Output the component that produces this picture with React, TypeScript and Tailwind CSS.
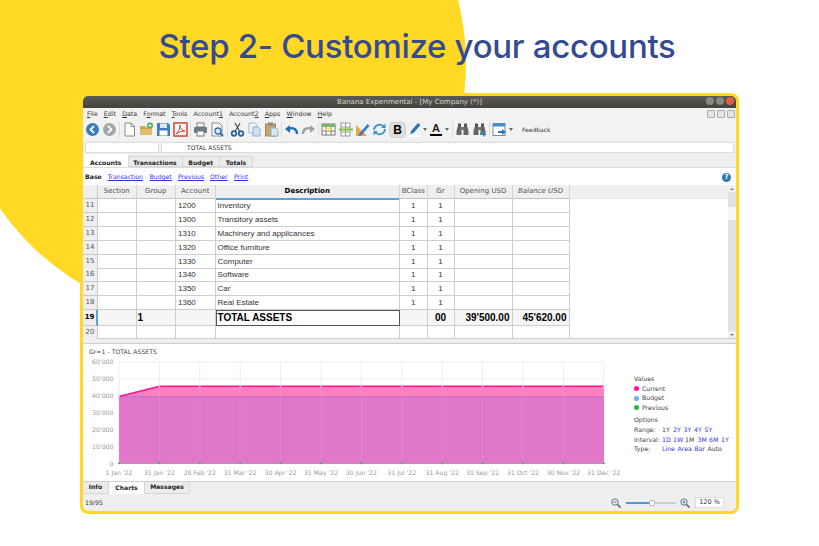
import React from 'react';

const MENU = [
  { pre: '', u: 'F', post: 'ile' },
  { pre: '', u: 'E', post: 'dit' },
  { pre: '', u: 'D', post: 'ata' },
  { pre: 'F', u: 'o', post: 'rmat' },
  { pre: '', u: 'T', post: 'ools' },
  { pre: 'Account', u: '1', post: '' },
  { pre: 'Account', u: '2', post: '' },
  { pre: '', u: 'A', post: 'pps' },
  { pre: '', u: 'W', post: 'indow' },
  { pre: '', u: 'H', post: 'elp' },
];

const COLS = 'grid grid-cols-[15px_38.5px_39.5px_39.5px_184.5px_27.5px_27px_58px_57px]';

const ROWS = [
  { n: '11', acc: '1200', desc: 'Inventory' },
  { n: '12', acc: '1300', desc: 'Transitory assets' },
  { n: '13', acc: '1310', desc: 'Machinery and applicances' },
  { n: '14', acc: '1320', desc: 'Office furniture' },
  { n: '15', acc: '1330', desc: 'Computer' },
  { n: '16', acc: '1340', desc: 'Software' },
  { n: '17', acc: '1350', desc: 'Car' },
  { n: '18', acc: '1360', desc: 'Real Estate' },
];

const TICKS = ["1 Jan '22", "31 Jan '22", "28 Feb '22", "31 Mar '22", "30 Apr '22", "31 May '22", "30 Jun '22", "31 Jul '22", "31 Aug '22", "30 Sep '22", "31 Oct '22", "30 Nov '22", "31 Dec '22"];
const YS = ["60'000", "50'000", "40'000", "30'000", "20'000", "10'000", '0'];

const Tool: React.FC<{ children?: React.ReactNode }> = ({ children }) => (
  <div className="w-[17px] h-[16px] flex items-center justify-center shrink-0">
    <svg width="15" height="15" viewBox="0 0 15 15">{children}</svg>
  </div>
);

const Sep = () => (
  <div className="w-[3px] h-[16px] flex justify-center shrink-0">
    <div className="w-px h-full bg-[#dcdcdc]" />
  </div>
);

const Caret = () => <div className="w-0 h-0 border-x-[2.5px] border-x-transparent border-t-[3px] border-t-[#666] shrink-0" />;

const Binoculars: React.FC<{ arrow?: boolean }> = ({ arrow }) => (
  <Tool>
    <rect x="3" y="1.5" width="3" height="4" fill="#555" />
    <rect x="9" y="1.5" width="3" height="4" fill="#555" />
    <rect x="6" y="5" width="3" height="3" fill="#777" />
    <path d="M2.5 5h4v8h-5v-4z M8.500 5h4l1 4v4h-5z" fill="#666" />
    {arrow && <path d="M8 11h3V9l3.500 3-3.500 3v-2H8z" fill="#3b82c4" />}
  </Tool>
);

const Toolbar = () => (
  <div className="h-[20px] shrink-0 flex items-center pl-px pb-px bg-[#f2f2f2]">
    <Tool>
      <circle cx="7.500" cy="7.500" r="6.500" fill="#3a7cbd" />
      <path d="M9 4 5.500 7.500 9 11" fill="none" stroke="#fff" strokeWidth="1.800" />
    </Tool>
    <Tool>
      <circle cx="7.500" cy="7.500" r="6.500" fill="#a6a6a6" />
      <path d="M6 4l3.500 3.500L6 11" fill="none" stroke="#fff" strokeWidth="1.800" />
    </Tool>
    <Sep />
    <Tool>
      <path d="M3 1h6l3.500 3.500V14H3z" fill="#fff" stroke="#8a8a8a" />
      <path d="M9 1v3.500h3.500" fill="none" stroke="#8a8a8a" />
    </Tool>
    <Tool>
      <path d="M1 4h5l1 1.500h6V13H1z" fill="#c9a75c" />
      <path d="M1 7h12v6H1z" fill="#e0bd6c" />
      <circle cx="11" cy="3.500" r="3" fill="#4fae5c" />
      <path d="M11 2v3M9.500 3.500h3" stroke="#fff" />
    </Tool>
    <Tool>
      <path d="M1 1h11l2 2v11H1z" fill="#3d7fc0" />
      <rect x="4" y="1.500" width="7" height="4.500" fill="#dfe9f3" />
      <rect x="3.500" y="8.500" width="8" height="5" fill="#fff" />
    </Tool>
    <Tool>
      <rect x="1" y="1" width="13" height="13" fill="#fff" stroke="#d6402f" strokeWidth="1.500" />
      <path d="M3 12c3-2 4-6 4-9 0 3 2 6 5 6-3 0-6 1-9 3z" fill="none" stroke="#d6402f" />
    </Tool>
    <Sep />
    <Tool>
      <rect x="4" y="1" width="7" height="4" fill="#fff" stroke="#777" />
      <rect x="1" y="5" width="13" height="6" rx="1" fill="#6f7a85" />
      <rect x="4" y="9" width="7" height="5" fill="#fff" stroke="#777" />
    </Tool>
    <Tool>
      <path d="M2 1h7l3 3v10H2z" fill="#fff" stroke="#8a8a8a" />
      <circle cx="8" cy="9" r="3" fill="#dbe9f5" stroke="#2f6ea8" strokeWidth="1.300" />
      <path d="M10 11l3 3" stroke="#2f6ea8" strokeWidth="1.800" />
    </Tool>
    <Sep />
    <Tool>
      <path d="M5 1l4.500 8M10 1L5.500 9" stroke="#555" strokeWidth="1.300" />
      <circle cx="4" cy="11.500" r="2.300" fill="none" stroke="#1f5c96" strokeWidth="1.700" />
      <circle cx="11" cy="11.500" r="2.300" fill="none" stroke="#1f5c96" strokeWidth="1.700" />
    </Tool>
    <Tool>
      <path d="M2 1h6l2 2v8H2z" fill="#eef3f8" stroke="#9db8d2" />
      <path d="M6 5h5l2 2v7H6z" fill="#cfe0f0" stroke="#8fb0cf" />
    </Tool>
    <Tool>
      <rect x="1.500" y="2" width="10" height="12" fill="#c9a568" stroke="#a5844c" />
      <rect x="4" y="0.500" width="5" height="3" fill="#888" />
      <path d="M7 6h5l2 2v6H7z" fill="#dbe6f1" stroke="#8fb0cf" />
    </Tool>
    <Sep />
    <Tool>
      <path d="M13 12c0-5-4-7-8.500-5" fill="none" stroke="#1f6fb5" strokeWidth="2.300" />
      <path d="M1 7l5-4v8z" fill="#1f6fb5" />
    </Tool>
    <Tool>
      <path d="M2 12c0-5 4-7 8.500-5" fill="none" stroke="#a0a0a0" strokeWidth="2.300" />
      <path d="M14 7l-5-4v8z" fill="#a0a0a0" />
    </Tool>
    <Sep />
    <Tool>
      <rect x="1" y="2" width="13" height="11" fill="#fff" stroke="#777" />
      <rect x="1" y="2" width="13" height="3" fill="#7bb661" />
      <path d="M1 9h13M5 5v8M10 5v8" stroke="#777" />
      <rect x="5" y="6" width="5" height="3" fill="#f0e080" />
    </Tool>
    <Tool>
      <rect x="3" y="1" width="9" height="13" fill="#fff" stroke="#999" />
      <path d="M3 5h9M3 10h9M7.500 1v13" stroke="#999" />
      <path d="M1 7.500h14" stroke="#7ec13f" strokeWidth="2" />
    </Tool>
    <Tool>
      <path d="M1 14V3l11 11z" fill="#eda349" />
      <path d="M4 12l8.500-10 2 2L6 13.500 3.500 14z" fill="#2f7fc4" />
    </Tool>
    <Tool>
      <path d="M2 8a5.500 5.500 0 0 1 9.500-3.500" fill="none" stroke="#3d8ed0" strokeWidth="1.800" />
      <path d="M13 7a5.500 5.500 0 0 1-9.500 3.500" fill="none" stroke="#3d8ed0" strokeWidth="1.800" />
      <path d="M13.500 1.500v4.500H9zM1.500 13.500V9H6z" fill="#3d8ed0" />
    </Tool>
    <div className="w-[17px] h-[16px] ml-[1px] bg-[#dedede] border border-[#d2d2d2] rounded-sm flex items-center justify-center font-['Liberation_Sans',sans-serif] text-[12px] font-bold text-black shrink-0">B</div>
    <div className="w-[16px] flex items-center justify-end shrink-0">
      <svg width="13" height="15" viewBox="0 0 13 15">
        <path d="M2 9l7-8 2.500 2-7 8-3 1z" fill="#2f74b5" />
        <rect x="0" y="13" width="11" height="2" fill="#fff" />
      </svg>
    </div>
    <div className="w-[5px] flex justify-end shrink-0"><Caret /></div>
    <div className="w-[16px] flex flex-col items-center leading-none shrink-0 ml-[1px]">
      <span className="font-['Liberation_Sans',sans-serif] text-[11px] font-bold text-[#222] h-[11px] leading-[11px]">A</span>
      <div className="w-[12px] h-[2px] bg-black" />
    </div>
    <div className="w-[5px] flex justify-end shrink-0"><Caret /></div>
    <div className="w-[2px] shrink-0" />
    <Sep />
    <Binoculars />
    <Binoculars arrow />
    <Sep />
    <Tool>
      <rect x="1" y="1.500" width="12" height="12" fill="#fff" stroke="#7f8c99" />
      <rect x="1" y="1.500" width="12" height="3" fill="#3d8ed0" />
      <path d="M6 9h4V7l4 3-4 3v-2H6z" fill="#2f74b5" />
    </Tool>
    <div className="w-[5px] flex justify-end shrink-0"><Caret /></div>
    <span className="ml-[9px] text-[6px] text-[#333]">Feedback</span>
  </div>
);

const Table = () => (
  <div className="relative h-[154px] shrink-0 flex bg-white border-b border-[#cfcfcf] font-['Liberation_Sans',sans-serif]">
    <div className="flex-1 min-w-0 flex flex-col">
      <div className={`${COLS} h-[14px] bg-[#efefef] border-b border-[#c4c4c4] font-['DejaVu_Sans',sans-serif] text-[7px] text-[#555] text-center leading-[13px]`}>
        <div className="border-r border-[#c8c8c8]" />
        <div className="border-r border-[#d4d4d4]">Section</div>
        <div className="border-r border-[#d4d4d4]">Group</div>
        <div className="border-r border-[#d4d4d4]">Account</div>
        <div className="border-r border-[#d4d4d4] border-b-2 border-b-[#5ba3d6] font-bold text-black">Description</div>
        <div className="border-r border-[#d4d4d4]">BClass</div>
        <div className="border-r border-[#d4d4d4]">Gr</div>
        <div className="border-r border-[#d4d4d4]">Opening USD</div>
        <div className="border-r border-[#d4d4d4] italic">Balance USD</div>
      </div>
      {ROWS.map((r) => (
        <div key={r.n} className={`${COLS} h-[13.900px] text-[8px] text-[#333] leading-[13px]`}>
          <div className="bg-[#efefef] border-r border-b border-[#c8c8c8] text-center font-['DejaVu_Sans',sans-serif] text-[7px] text-[#555]">{r.n}</div>
          <div className="border-r border-b border-[#cdcdcd]" />
          <div className="border-r border-b border-[#cdcdcd]" />
          <div className="border-r border-b border-[#cdcdcd] pl-[2px]">{r.acc}</div>
          <div className="border-r border-b border-[#cdcdcd] pl-[2px]">{r.desc}</div>
          <div className="border-r border-b border-[#cdcdcd] text-center">1</div>
          <div className="border-r border-b border-[#cdcdcd] text-center">1</div>
          <div className="border-r border-b border-[#cdcdcd]" />
          <div className="border-r border-b border-[#cdcdcd]" />
        </div>
      ))}
      <div className={`${COLS} h-[15.700px] text-[10px] font-bold text-black leading-[15px]`}>
        <div className="bg-[#efefef] border-r-2 border-r-[#5ba3d6] border-b border-b-[#c8c8c8] text-center font-['DejaVu_Sans',sans-serif] text-[7px]">19</div>
        <div className="bg-[#f5f5f5] border-r border-b border-[#cdcdcd]" />
        <div className="bg-[#f5f5f5] border-r border-b border-[#cdcdcd] pl-px">1</div>
        <div className="bg-[#f5f5f5] border-r border-b border-[#cdcdcd]" />
        <div className="border border-[#555] pl-[1px] leading-[13px]">TOTAL ASSETS</div>
        <div className="bg-[#f5f5f5] border-r border-b border-[#cdcdcd]" />
        <div className="bg-[#f5f5f5] border-r border-b border-[#cdcdcd] text-center">00</div>
        <div className="bg-[#f5f5f5] border-r border-b border-[#cdcdcd] text-right pr-[2px]">39'500.00</div>
        <div className="bg-[#f5f5f5] border-r border-b border-[#cdcdcd] text-right pr-[2px]">45'620.00</div>
      </div>
      <div className={`${COLS} h-[13.400px] text-[8px] leading-[13px]`}>
        <div className="bg-[#efefef] border-r border-[#c8c8c8] text-center font-['DejaVu_Sans',sans-serif] text-[7px] text-[#555]">20</div>
        <div className="border-r border-[#cdcdcd]" />
        <div className="border-r border-[#cdcdcd]" />
        <div className="border-r border-[#cdcdcd]" />
        <div className="border-r border-[#cdcdcd]" />
        <div className="border-r border-[#cdcdcd]" />
        <div className="border-r border-[#cdcdcd]" />
        <div className="border-r border-[#cdcdcd]" />
        <div className="border-r border-[#cdcdcd]" />
      </div>
    </div>
    <div className="w-[8px] bg-[#e2e2e2] flex flex-col shrink-0">
      <div className="h-[7px] flex items-center justify-center bg-[#f0f0f0]">
        <div className="w-0 h-0 border-x-[2px] border-x-transparent border-b-[2px] border-b-[#777]" />
      </div>
      <div className="h-[13px] mt-[15px] bg-[#f7f7f7]" />
      <div className="flex-1" />
      <div className="h-[7px] flex items-center justify-center bg-[#f0f0f0]">
        <div className="w-0 h-0 border-x-[2px] border-x-transparent border-t-[2px] border-t-[#777]" />
      </div>
    </div>
    <div className="absolute left-[487px] right-[8px] top-0 h-[14px] bg-[#efefef] border-b border-[#e4e4e4]" />
  </div>
);

const Chart = () => {
  const x = (i: number) => 119 + i * 40.4;
  return (
    <svg width="549" height="122" viewBox="83 358 549 122" className="block shrink-0 font-['DejaVu_Sans',sans-serif]">
      {YS.map((_, i) => (
        <line key={i} x1="119" x2="604" y1={362 + i * 16.88} y2={362 + i * 16.88} stroke="#ededed" />
      ))}
      {TICKS.map((_, i) => (
        <line key={i} x1={x(i)} x2={x(i)} y1="362" y2="463" stroke="#ededed" />
      ))}
      <path d="M119 396.600L159.400 386.300H604V463.300H119z" fill="#ff80bf" />
      <rect x="119" y="396.600" width="485" height="66.700" fill="#e077c8" />
      <line x1="119" x2="604" y1="396.600" y2="396.600" stroke="#c06fd0" />
      <line x1="119" x2="604" y1="463.300" y2="463.300" stroke="#b58ca8" />
      {TICKS.map((_, i) => (
        <line key={i} x1={x(i)} x2={x(i)} y1="387" y2="463" stroke="#f3c6e4" strokeWidth="0.500" opacity="0.300" />
      ))}
      <path d="M119 396.600L159.400 386.300H604" fill="none" stroke="#ff1493" strokeWidth="1.500" />
      {TICKS.map((_, i) => (
        <g key={i}>
          <circle cx={x(i)} cy="463.300" r="1" fill="#2fb14f" />
          <circle cx={x(i)} cy={i === 0 ? 396.6 : 386.3} r="0.900" fill="#ffd0e8" />
        </g>
      ))}
      {YS.map((t, i) => (
        <text key={t} x="113.500" y={364.300 + i * 16.88} textAnchor="end" fontSize="6.200" fill="#999">{t}</text>
      ))}
      {TICKS.map((t, i) => (
        <text key={t} x={x(i)} y="474.500" textAnchor="middle" fontSize="6.200" fill="#999">{t}</text>
      ))}
    </svg>
  );
};

const Legend = () => (
  <div className="pt-[30px] pl-[1px] text-[6.200px] text-[#444] leading-[9.700px] w-[100px]">
    <div>Values</div>
    <div className="flex items-center"><span className="w-[5px] h-[5px] rounded-full bg-[#ff1493] mr-[3px]" />Current</div>
    <div className="flex items-center"><span className="w-[5px] h-[5px] rounded-full bg-[#6ab7f0] mr-[3px]" />Budget</div>
    <div className="flex items-center"><span className="w-[5px] h-[5px] rounded-full bg-[#2fb14f] mr-[3px]" />Previous</div>
    <div className="mt-[2.300px]">Options</div>
    <div className="flex">
      <span className="w-[28px]">Range:</span>
      <span className="w-[11px]">1Y</span>
      <span className="w-[10.500px] text-[#3333ee]">2Y</span>
      <span className="w-[10.500px] text-[#3333ee]">3Y</span>
      <span className="w-[10.500px] text-[#3333ee]">4Y</span>
      <span className="text-[#3333ee]">5Y</span>
    </div>
    <div className="flex">
      <span className="w-[28px]">Interval:</span>
      <span className="w-[11px] text-[#3333ee]">1D</span>
      <span className="w-[12px] text-[#3333ee]">1W</span>
      <span className="w-[12.500px]">1M</span>
      <span className="w-[11.500px] text-[#3333ee]">3M</span>
      <span className="w-[12px] text-[#3333ee]">6M</span>
      <span className="text-[#3333ee]">1Y</span>
    </div>
    <div className="flex">
      <span className="w-[28px]">Type:</span>
      <span className="w-[15.500px] text-[#3333ee]">Line</span>
      <span className="w-[17px] text-[#3333ee]">Area</span>
      <span className="w-[13px] text-[#3333ee]">Bar</span>
      <span>Auto</span>
    </div>
  </div>
);

const ZoomIcon: React.FC<{ plus?: boolean }> = ({ plus }) => (
  <svg width="10" height="10" viewBox="0 0 10 10">
    <circle cx="4" cy="4" r="3.200" fill="#e8f0f6" stroke="#6c7780" />
    <path d="M6.500 6.500 9.500 9.500" stroke="#555" strokeWidth="1.500" />
    <path d={plus ? 'M2.500 4h3M4 2.500v3' : 'M2.500 4h3'} stroke="#4a7fb0" />
  </svg>
);

export default function App() {
  return (
    <div className="relative w-[819px] h-[546px] overflow-hidden bg-white font-['DejaVu_Sans',sans-serif]">
      <div className="absolute left-[-45px] top-[-192px] w-[511px] h-[511px] rounded-full bg-[#ffd923]" />
      <div className="relative flex flex-col">
        <h1 className="h-[93px] pt-[25px] pl-[15px] text-center font-['Inter',sans-serif] font-medium text-[33px] tracking-[-0.3px] leading-[42px] text-[#364a94]">
          Step 2- Customize your accounts
        </h1>
        <div className="mx-[80px] h-[421px] border-[3px] border-[#ffd923] rounded-[8px] overflow-hidden bg-[#efefef] flex flex-col">
          <div className="h-[12px] shrink-0 bg-gradient-to-b from-[#5c5a54] to-[#45433d] flex items-center justify-center relative text-[7px] text-[#d4d4d4]">
            Banana Experimental - [My Company (*)]
            <div className="absolute right-[2px] top-[1px] flex gap-[2px]">
              <span className="w-[8px] h-[8px] rounded-full bg-[#8a8882]" />
              <span className="w-[8px] h-[8px] rounded-full bg-[#8a8882]" />
              <span className="w-[8px] h-[8px] rounded-full bg-[#e0603a]" />
            </div>
          </div>
          <div className="h-[12px] shrink-0 flex items-center bg-[#f2f2f2] pl-[4px] text-[6.300px] text-[#333] gap-[6.200px] relative">
            {MENU.map((m) => (
              <span key={m.pre + m.u + m.post}>{m.pre}<u>{m.u}</u>{m.post}</span>
            ))}
            <div className="absolute right-[1px] top-[2px] flex gap-[2px]">
              <span className="w-[8px] h-[8px] border border-[#aaa] bg-[#e4e4e4] rounded-[1px]" />
              <span className="w-[8px] h-[8px] border border-[#aaa] bg-[#e4e4e4] rounded-[1px]" />
              <span className="w-[8px] h-[8px] border border-[#aaa] bg-[#e4e4e4] rounded-[1px]" />
            </div>
          </div>
          <Toolbar />
          <div className="h-[15px] shrink-0 flex items-center gap-[2px] px-[2px] text-[6.100px] text-[#333]">
            <div className="w-[74px] h-[11px] bg-white border border-[#dcdcdc]" />
            <div className="flex-1 h-[11px] bg-white border border-[#dcdcdc] pl-[25px] leading-[9px]">TOTAL ASSETS</div>
          </div>
          <div className="h-[13px] shrink-0 flex items-end pl-px text-[6.100px] font-bold text-[#222] border-b border-[#dcdcdc]">
            <div className="w-[43.500px] h-[13px] bg-white text-center leading-[17px]">Accounts</div>
            <div className="w-[55px] h-[11px] bg-[#ececec] border border-[#d6d6d6] text-center leading-[12px]">Transactions</div>
            <div className="w-[37.500px] h-[11px] bg-[#ececec] border border-l-0 border-[#d6d6d6] text-center leading-[12px]">Budget</div>
            <div className="w-[33px] h-[11px] bg-[#ececec] border border-l-0 border-[#d6d6d6] text-center leading-[12px]">Totals</div>
          </div>
          <div className="h-[17px] shrink-0 bg-white flex items-center pl-[2px] pr-[5px] pt-px text-[6.200px] text-[#3333ee] relative">
            <span className="font-bold text-[#222] w-[22.500px]">Base</span>
            <span className="underline w-[42px]">Transaction</span>
            <span className="underline w-[28.500px]">Budget</span>
            <span className="underline w-[32px]">Previous</span>
            <span className="underline w-[24px]">Other</span>
            <span className="underline">Print</span>
            <span className="ml-auto w-[9px] h-[9px] rounded-full bg-[#2f78b8] text-white text-[7px] font-bold flex items-center justify-center">?</span>
          </div>
          <Table />
          <div className="h-[4px] shrink-0" />
          <div className="h-[139px] shrink-0 bg-white border-y border-[#cfcfcf] flex">
            <div className="flex flex-col w-[550px] shrink-0">
              <div className="h-[14px] pl-[6px] text-[6.200px] text-[#444] leading-[16px]">Gr=1 - TOTAL ASSETS</div>
              <Chart />
            </div>
            <Legend />
          </div>
          <div className="h-[12px] shrink-0 flex text-[6.100px] font-bold text-[#222] leading-[10px]">
            <div className="w-[26px] bg-[#ececec] border-r border-b border-[#d6d6d6] text-center">Info</div>
            <div className="w-[35px] bg-white text-center leading-[11px]">Charts</div>
            <div className="w-[46px] bg-[#ececec] border-x border-b border-[#d6d6d6] text-center">Messages</div>
          </div>
          <div className="flex-1 flex items-center pl-[2px] pr-[12px] text-[6.200px] text-[#333]">
            <span>19/95</span>
            <div className="ml-auto flex items-center">
              <ZoomIcon />
              <div className="w-[50px] h-[2px] ml-[5px] mr-[4px] bg-[#cfcfcf] relative">
                <div className="w-[26px] h-full bg-[#4a9ad8]" />
                <div className="absolute left-[23px] top-[-2px] w-[6px] h-[6px] bg-white border border-[#bbb] rounded-[1px]" />
              </div>
              <ZoomIcon plus />
              <div className="w-[29px] h-[11px] ml-[5px] bg-white border border-[#dcdcdc] text-center leading-[9px] text-[6.500px]">120 %</div>
            </div>
          </div>
        </div>
      </div>
    </div>
  );
}
